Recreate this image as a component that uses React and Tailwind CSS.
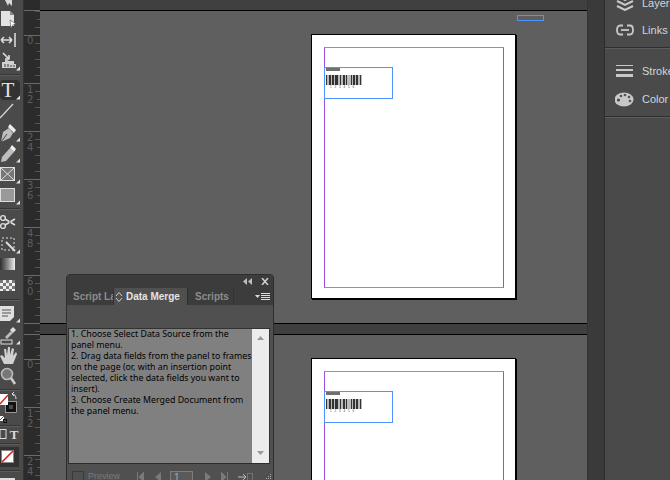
const font = { fontFamily: '"Liberation Sans", "DejaVu Sans", sans-serif' };
const bodyFont = { fontFamily: '"Noto Sans", "DejaVu Sans", sans-serif' };

// little corner triangle on tools that have a flyout
const Flyout = () => <path d="M20 19.5 L20 15.5 L16 19.5 Z" fill="#e0e0e0" />;

const Tool = ({ h = 21, active, fly, children }) => (
  <div className="flex items-center justify-center shrink-0" style={{ height: h }}>
    <div className={`w-[20px] h-[20px] ${active ? 'bg-[#323232] rounded-sm' : ''}`}>
      <svg width="20" height="20" viewBox="0 0 20 20" className="block">
        {children}
        {fly && <Flyout />}
      </svg>
    </div>
  </div>
);

const Sep = () => <div className="h-[2px] bg-[#5c5c5c] border-t border-[#353535] shrink-0 w-[20px]" />;

const Toolbar = () => (
  <div className="w-[23px] h-full bg-[#4a4a4a] overflow-hidden flex flex-col items-start">
    <div className="h-[7px] shrink-0 overflow-hidden">
      <svg width="20" height="7" className="block"><path d="M5 0 L8 6 L9 3 L12 6 L12 0 Z" fill="#d8d8d8" /></svg>
    </div>
    <Tool h={24} fly={false}>
      <path d="M1 2 H10 L14 6 V17 H1 Z" fill="#e2e2e2" /><path d="M10 2 L14 6 H10 Z" fill="#888" />
      <path d="M10 11 L16 15 L12.5 16 L11 20 Z" fill="#fff" stroke="#333" strokeWidth=".5" />
    </Tool>
    <Tool h={18}>
      <path d="M1 10 H12 M1 10 L4 7 M1 10 L4 13 M12 10 L9 7 M12 10 L9 13" stroke="#e0e0e0" strokeWidth="1.5" fill="none" />
      <rect x="14" y="3" width="2" height="14" fill="#bbb" />
    </Tool>
    <Tool h={23} fly>
      <path d="M3 2 L9 8 M9 4 V8 H5" stroke="#e0e0e0" strokeWidth="1.5" fill="none" />
      <path d="M2 17 V11 H5 V8 L9 10 H14 V13 H16 V17 Z" fill="#d0d0d0" />
      <path d="M5 13 V16 M8 13 V16 M11 14 V16 M14 14 V16" stroke="#555" strokeWidth="1.2" />
    </Tool>
    <div className="h-[2px] shrink-0" />
    <Sep />
    <div className="h-[3px] shrink-0" />
    <Tool h={21} active fly>
      <text x="8" y="16.5" textAnchor="middle" fontFamily="Liberation Serif, serif" fontSize="21" fill="#e4e4e4">T</text>
    </Tool>
    <Tool h={21}>
      <path d="M0 17 L13 3" stroke="#d8d8d8" strokeWidth="1.2" />
    </Tool>
    <Tool h={21} fly>
      <path d="M1 20 L3 10 L9 6 L13 11 L10 16 Z" fill="#bdbdbd" /><path d="M10 2 L16 8 L14 11 L8 5 Z" fill="#eee" />
      <path d="M1 20 L7 12" stroke="#444" strokeWidth="1" />
    </Tool>
    <Tool h={21} fly>
      <path d="M1 19 L2 14 L10 5 L14 9 L6 18 Z" fill="#bdbdbd" /><path d="M10 5 L12 2 L16 6 L14 9 Z" fill="#f0f0f0" />
    </Tool>
    <Tool h={21} fly>
      <rect x="0.5" y="3.5" width="14" height="13" fill="#777" stroke="#ddd" />
      <path d="M1 4 L14 16 M14 4 L1 16" stroke="#ddd" />
    </Tool>
    <Tool h={22} fly>
      <rect x="0.5" y="3.5" width="14" height="13" fill="#999" stroke="#ddd" />
    </Tool>
    <div className="h-[2px] shrink-0" />
    <Sep />
    <div className="h-[1px] shrink-0" />
    <Tool h={22}>
      <circle cx="3" cy="6" r="2.4" fill="none" stroke="#ddd" strokeWidth="1.4" />
      <circle cx="3" cy="14" r="2.4" fill="none" stroke="#ddd" strokeWidth="1.4" />
      <path d="M5 7 L15 13 M5 13 L15 7" stroke="#ddd" strokeWidth="1.5" />
      <circle cx="10" cy="10" r=".8" fill="#555" />
    </Tool>
    <Tool h={21} fly>
      <path d="M2 4 H14 V16 H2 Z" fill="none" stroke="#ddd" strokeDasharray="2 2" />
      <path d="M6 8 L15 17" stroke="#ddd" strokeWidth="2" />
    </Tool>
    <div className="h-[12px] w-[15px] mt-[4px] bg-gradient-to-r from-[#2e2e2e] to-[#eee] shrink-0" />
    <div className="h-[11px] w-[15px] mt-[10px] bg-[repeating-conic-gradient(#eee_0_25%,#777_0_50%)] bg-[length:6px_6px] shrink-0" />
    <div className="h-[8px] shrink-0" />
    <Sep />
    <div className="h-[1px] shrink-0" />
    <Tool h={22} fly>
      <path d="M0 3 H14 V14 L10 18 H0 Z" fill="#e0e0e0" />
      <path d="M2 7 H11 M2 10 H11 M2 13 H8" stroke="#555" />
    </Tool>
    <Tool h={21} fly>
      <path d="M13 2 L16 5 L13 8 L10 5 Z" fill="#ddd" /><path d="M11 6 L5 12 L7 14 L13 8" fill="#bbb" />
      <rect x="1" y="15" width="11" height="4" fill="none" stroke="#ddd" />
    </Tool>
    <Tool h={21}>
      <path d="M4 18 L0 10 L2 9 L5 12 L4 3 L6 3 L7 9 L8 1 L10 1 L10 9 L12 2 L14 3 L13 10 L16 6 L17 8 L13 18 Z" fill="#d0d0d0" />
    </Tool>
    <Tool h={20}>
      <circle cx="7" cy="8" r="5.5" fill="#777" stroke="#bbb" strokeWidth="1.6" />
      <path d="M11 12 L15 18" stroke="#ccc" strokeWidth="2.6" />
    </Tool>
    <div className="h-[3px] shrink-0" />
    <Sep />
    <div className="h-[34px] shrink-0">
      <svg width="20" height="34" className="block">
        <rect x="7.5" y="12.5" width="7" height="7" fill="none" stroke="#111" strokeWidth="3" />
        <rect x="5.5" y="10.5" width="11" height="11" fill="none" stroke="#ccc" strokeWidth=".6" />
        <rect x="0" y="3" width="8" height="11" fill="#fff" />
        <path d="M0 13 L8 4" stroke="#e01919" strokeWidth="1.4" />
        <path d="M12 3 Q16 3 16 8 M12 3 L14 1 M12 3 L14 5" stroke="#ddd" fill="none" />
        <rect x="0" y="25" width="4" height="5" fill="#fff" /><path d="M0 29 L4 25" stroke="#e01919" />
        <rect x="3.5" y="28.5" width="3" height="3" fill="none" stroke="#111" />
      </svg>
    </div>
    <Sep />
    <div className="h-[16px] shrink-0">
      <svg width="20" height="16" className="block">
        <rect x="0" y="2.5" width="6" height="9" fill="none" stroke="#ddd" />
        <text x="14" y="12" textAnchor="middle" fontFamily="Liberation Serif, serif" fontWeight="bold" fontSize="13" fill="#ddd">T</text>
      </svg>
    </div>
    <Sep />
    <div className="h-[2px] shrink-0" />
    <div className="h-[20px] w-[19px] bg-[#323232] shrink-0 flex items-center justify-center">
      <svg width="19" height="20" className="block">
        <rect x="1.5" y="3.5" width="12" height="12" fill="#fff" stroke="#888" />
        <path d="M2 15 L13 4" stroke="#e01919" strokeWidth="1.6" />
      </svg>
    </div>
    <div className="h-[3px] shrink-0" />
    <Sep />
    <div className="h-[6px] shrink-0" />
    <div className="h-[4px] w-[15px] bg-[#ddd] shrink-0" />
  </div>
);

const majors = [10, 35, 83, 131, 179, 227, 275, 323, 334, 359, 407, 455];
const minors = [];
for (let y = 11; y < 480; y += 8) minors.push(y);

const RulerNum = ({ top, a, b }) => (
  <div className="absolute left-[3px] text-[10px] leading-[11px] text-[#5e5e5e] flex flex-col" style={{ top, fontFamily: '"DejaVu Sans", sans-serif' }}>
    <span>{a}</span>
    {b && <span className="-mt-[1px]">{b}</span>}
  </div>
);

const Ruler = () => (
  <div className="w-[16px] h-full bg-[#2b2b2b] relative overflow-hidden">
    <svg width="16" height="480" className="block absolute left-0 top-0">
      {minors.map((y, i) => (
        <line key={y} x1={i % 2 ? 13 : 11} x2="16" y1={y + 0.5} y2={y + 0.5} stroke="#565656" />
      ))}
      {majors.map(y => (
        <line key={y} x1="0" x2="16" y1={y + 0.5} y2={y + 0.5} stroke="#6a6a6a" />
      ))}
    </svg>
    <RulerNum top={35} a="0" />
    <RulerNum top={84} a="1" b="2" />
    <RulerNum top={132} a="2" b="4" />
    <RulerNum top={180} a="3" b="6" />
    <RulerNum top={228} a="4" b="8" />
    <RulerNum top={276} a="6" b="0" />
    <RulerNum top={359} a="0" />
    <RulerNum top={408} a="1" b="2" />
    <RulerNum top={456} a="2" b="4" />
  </div>
);

const bars = [1, 2, 1, 1, 2, 1, 3, 1, 1, 2, 2, 1, 1, 3, 1, 1, 2, 1, 1, 2, 1, 1];

const Page = ({ top, height }) => (
  <div
    className="absolute left-[271px] w-[205px] bg-white border border-black shadow-[1px_1px_0_#000]"
    style={{ top, height }}
  >
    <div className="absolute left-[12px] top-[12px] w-[180px] h-[241px] border border-[#e45ce4] border-l-[#9b4fe0] border-r-[#9b4fe0]" />
    <div className="absolute left-[12px] top-[32px] w-[69px] h-[32px] border border-[#4d94ff]">
      <div className="ml-[1px] mt-0 w-[14px] h-[3px] bg-[#6f6f6f]" />
      <div className="ml-[1px] mt-[4px] flex h-[10px] w-[36px] overflow-hidden bg-[#ddd]">
        {bars.map((w, i) => (
          <div key={i} className={i % 2 ? 'bg-[#bbb]' : 'bg-[#333]'} style={{ width: w * 1.3 }} />
        ))}
      </div>
      <div className="ml-[5px] text-[3px] leading-[4px] tracking-[1px] text-[#444]" style={font}>1 2 3 4 5 6</div>
    </div>
  </div>
);

const Canvas = () => (
  <div className="flex-1 h-full bg-[#5f5f5f] relative overflow-hidden">
    <div className="h-[11px] bg-[#404040] border-b border-black" />
    <div className="absolute left-0 right-0 top-[323px] h-[12px] bg-[#3f3f3f] border-y border-black" />
    <div className="absolute left-[477px] top-[15px] w-[27px] h-[6px] border border-[#4d94ff]" />
    <Page top={34} height={265} />
    <Page top={358} height={265} />
  </div>
);

const PanelIcon = ({ children }) => (
  <svg width="20" height="16" viewBox="0 0 20 16" className="block shrink-0">{children}</svg>
);

const DockItem = ({ icon, label }) => (
  <div className="h-[20px] flex items-center gap-[7px] pl-[10px] shrink-0">
    <PanelIcon>{icon}</PanelIcon>
    <span className="text-[11px] text-[#d0d6dc] whitespace-nowrap" style={font}>{label}</span>
  </div>
);

const Dock = () => (
  <div className="w-[66px] h-full bg-[#4a4a4a] border-l border-[#2c2c2c] overflow-hidden flex flex-col">
    <div className="pb-[7px] -mt-[7px]">
      <DockItem
        label="Layers"
        icon={<path d="M2 6 L10 10 L18 6 M2 11 L10 15 L18 11 M3 1 L10 5 L17 1" stroke="#c8c8c8" strokeWidth="2" fill="none" />}
      />
      <div className="h-[7px]" />
      <DockItem
        label="Links"
        icon={<g stroke="#c8c8c8" strokeWidth="1.8" fill="none"><path d="M8 3.5 H5 Q2 3.5 2 8 Q2 12.5 5 12.5 H8" /><path d="M12 3.5 H15 Q18 3.5 18 8 Q18 12.5 15 12.5 H12" /><path d="M6 8 H14" /></g>}
      />
    </div>
    <div className="h-px bg-[#2f2f2f] shrink-0" />
    <div className="h-px bg-[#5c5c5c] shrink-0" />
    <div className="h-[12px] shrink-0" />
    <DockItem
      label="Stroke"
      icon={<g fill="#c8c8c8"><rect x="1" y="2" width="17" height="1" /><rect x="1" y="6" width="17" height="2" /><rect x="1" y="11" width="17" height="3" /></g>}
    />
    <div className="h-[8px] shrink-0" />
    <DockItem
      label="Color"
      icon={<g><ellipse cx="9" cy="8.5" rx="9.5" ry="7" fill="#c8c8c8" /><circle cx="6" cy="5" r="1.3" fill="#555" /><circle cx="10" cy="4" r="1.3" fill="#555" /><circle cx="14" cy="6" r="1.3" fill="#555" /><circle cx="15" cy="10" r="1.3" fill="#555" /><circle cx="3.5" cy="9" r="1.6" fill="#4a4a4a" /></g>}
    />
    <div className="h-px bg-[#2f2f2f] mt-[7px] shrink-0" />
    <div className="h-px bg-[#5c5c5c] shrink-0" />
  </div>
);

const Tab = ({ active, w, children }) => (
  <div
    className={`h-[17px] flex items-center text-[10px] font-bold shrink-0 overflow-hidden whitespace-nowrap ${active ? 'bg-[#505050] text-[#e4e4e4] border-r border-[#2c2c2c]' : 'text-[#8c8c8c] border-r border-[#333]'}`}
    style={{ width: w, ...font }}
  >
    {children}
  </div>
);

const FloatingPanel = () => (
  <div className="absolute left-[66px] top-[274px] w-[208px] h-[220px] bg-[#505050] border border-[#2e2e2e] rounded-t-[4px] overflow-hidden flex flex-col">
    <div className="h-[13px] bg-[#3c3c3c] flex items-center justify-end gap-[9px] pr-[4px] shrink-0">
      <svg width="9" height="7" className="block"><path d="M4 0 V7 L0 3.5 Z M9 0 V7 L5 3.5 Z" fill="#bdbdbd" /></svg>
      <svg width="8" height="7" className="block"><path d="M1 0 L7 7 M7 0 L1 7" stroke="#d0d0d0" strokeWidth="1.5" /></svg>
    </div>
    <div className="h-[17px] bg-[#3c3c3c] flex items-end shrink-0">
      <Tab w={47}><span className="pl-[6px]">Script La</span></Tab>
      <Tab w={74} active>
        <svg width="9" height="12" className="block ml-[1px] mr-[2px] shrink-0"><path d="M1 5 L4 1.5 L7 5 M1 7 L4 10.5 L7 7" stroke="#ccc" fill="none" /></svg>
        <span>Data Merge</span>
      </Tab>
      <Tab w={46}><span className="pl-[7px]">Scripts</span></Tab>
      <div className="flex-1 flex justify-end items-center pr-[3px] h-full">
        <svg width="15" height="8" className="block"><path d="M0 2 H5 L2.5 5 Z" fill="#ddd" /><path d="M6 0.5 H15 M6 2.5 H15 M6 4.5 H15 M6 6.5 H15" stroke="#ddd" /></svg>
      </div>
    </div>
    <div className="h-[23px] shrink-0" />
    <div className="mx-[1px] w-[202px] h-[136px] flex border border-[#333] border-b-[#2c2c2c] shrink-0">
      <div className="flex-1 min-w-0 bg-[#808080] pl-[2px] text-[8.8px] leading-[11px] text-black whitespace-nowrap overflow-hidden" style={bodyFont}>
        <p>1. Choose Select Data Source from the<br />panel menu.</p>
        <p>2. Drag data fields from the panel to frames<br />on the page (or, with an insertion point<br />selected, click the data fields you want to<br />insert).</p>
        <p>3. Choose Create Merged Document from<br />the panel menu.</p>
      </div>
      <div className="w-[17px] shrink-0 bg-[#ececec] flex flex-col items-center justify-between py-[7px]">
        <svg width="7" height="5" className="block"><path d="M0 4 H7 L3.5 0 Z" fill="#999" /></svg>
        <svg width="7" height="5" className="block"><path d="M0 0 H7 L3.5 4 Z" fill="#999" /></svg>
      </div>
    </div>
    <div className="flex items-center h-[26px] pl-[5px] shrink-0">
      <div className="w-[12px] h-[12px] border border-[#3a3a3a] mr-[4px]" />
      <span className="text-[9px] text-[#7a7a7a] w-[49px]" style={font}>Preview</span>
      <svg width="7" height="10" className="block mr-[11px]"><path d="M0.5 0 V10 M7 0 V10 L2 5 Z" stroke="#7a7a7a" fill="#7a7a7a" /></svg>
      <svg width="6" height="10" className="block mr-[9px]"><path d="M6 0 V10 L0 5 Z" fill="#7a7a7a" /></svg>
      <div className="w-[23px] h-[13px] border border-[#7d7d7d] bg-[#5a5a5a] text-[10px] leading-[11px] text-[#aaa] pl-[3px] mr-[12px]" style={font}>1</div>
      <svg width="6" height="10" className="block mr-[10px]"><path d="M0 0 V10 L6 5 Z" fill="#7a7a7a" /></svg>
      <svg width="7" height="10" className="block mr-[10px]"><path d="M6.5 0 V10 M0 0 V10 L5 5 Z" stroke="#7a7a7a" fill="#7a7a7a" /></svg>
      <svg width="15" height="10" className="block"><path d="M0 5 H7 M5 2 L8 5 L5 8" stroke="#bbb" fill="none" /><rect x="9.5" y="1.5" width="5" height="7" fill="none" stroke="#999" strokeDasharray="1 1" /></svg>
      <svg width="6" height="6" className="block ml-[13px]"><path d="M4 0 h1 v1 h-1 Z M2 2 h1 v1 h-1 Z M4 2 h1 v1 h-1 Z M0 4 h1 v1 h-1 Z M2 4 h1 v1 h-1 Z M4 4 h1 v1 h-1 Z" fill="#aaa" /></svg>
    </div>
  </div>
);

export default function App() {
  return (
    <div className="w-[670px] h-[480px] flex overflow-hidden relative bg-[#4a4a4a]">
      <Toolbar />
      <div className="w-px h-full bg-[#333]" />
      <Ruler />
      <Canvas />
      <div className="w-[17px] h-full bg-[#3a3a3a] border-l border-[#333]" />
      <Dock />
      <FloatingPanel />
    </div>
  );
}
